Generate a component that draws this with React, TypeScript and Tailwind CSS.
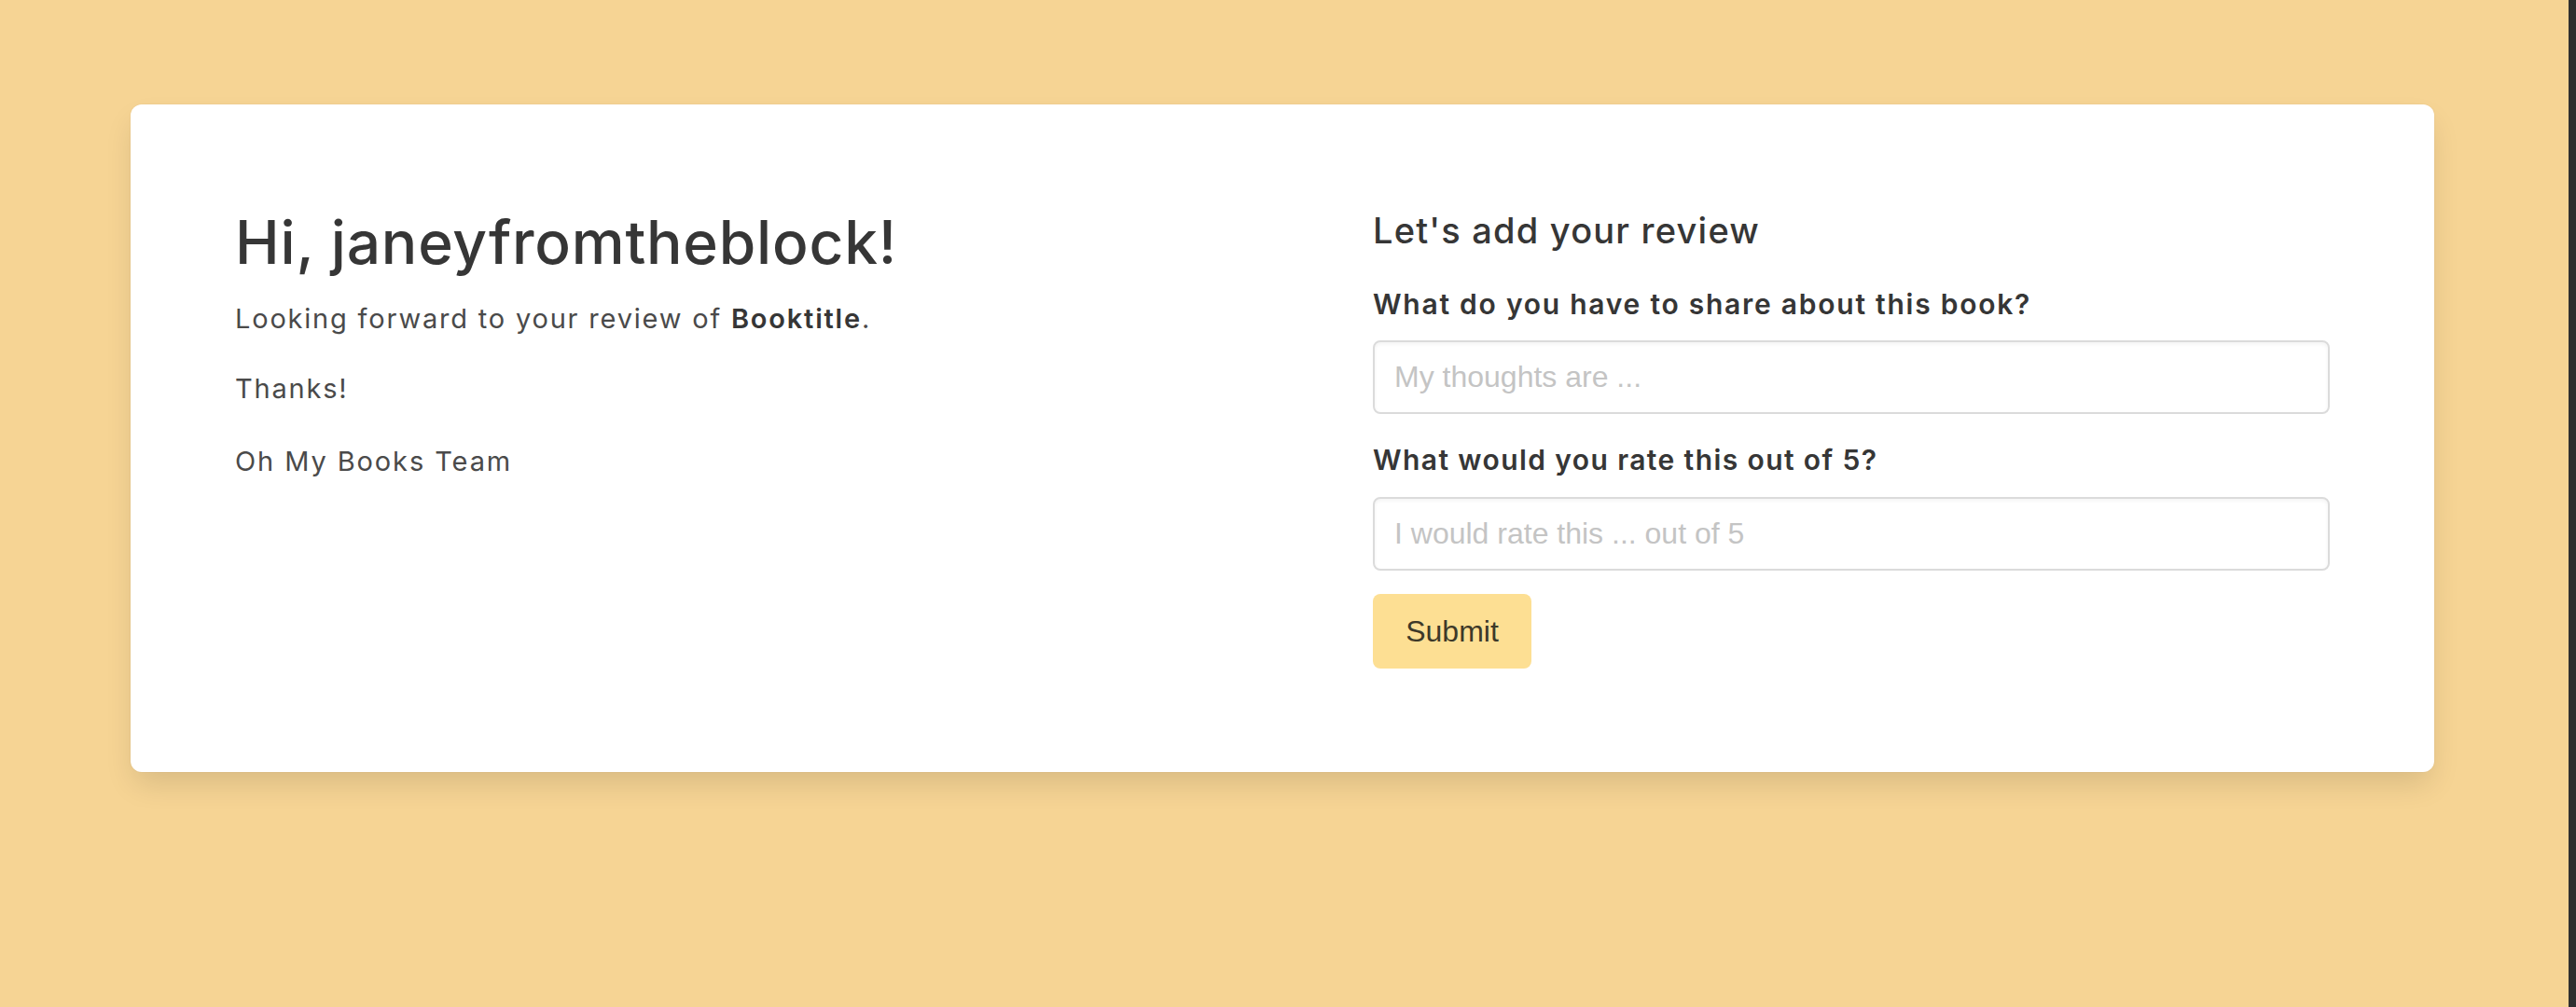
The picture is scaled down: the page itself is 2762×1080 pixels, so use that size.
import React from "react";

export default function App() {
  const poppins = { fontFamily: "Inter, 'Open Sans', sans-serif" };
  const sys = { fontFamily: "'Liberation Sans', Arial, sans-serif" };
  return (
    <div className="flex h-[1080px] w-full bg-[#f6d494]">
      <div className="flex-1">
        <div
          className="ml-[140px] mr-[144px] mt-[112px] rounded-[12px] bg-white pt-[116px] pb-[111px] px-[112px] shadow-[0_16px_32px_-4px_rgba(10,10,10,0.12),0_0_0_1px_rgba(10,10,10,0.02)]"
          style={poppins}
        >
          <div className="flex">
            <div className="flex-1">
              <h1 className="text-[64px] leading-none font-medium tracking-[0.8px] text-[#363636]">
                Hi, janeyfromtheblock!
              </h1>
              <p className="mt-[35px] text-[29px] leading-none tracking-[1.8px] text-[#4a4a4a]">
                Looking forward to your review of{" "}
                <span className="font-semibold text-[#363636]">Booktitle</span>.
              </p>
              <p className="mt-[46px] text-[29px] leading-none tracking-[1.8px] text-[#4a4a4a]">
                Thanks!
              </p>
              <p className="mt-[49px] text-[29px] leading-none tracking-[1.9px] text-[#4a4a4a]">
                Oh My Books Team
              </p>
            </div>
            <div className="w-[1026px] flex flex-col items-start">
              <h2 className="text-[38px] leading-none font-medium tracking-[1.2px] text-[#363636]">
                Let's add your review
              </h2>
              <label className="mt-[45px] text-[30px] leading-none font-semibold tracking-[1.75px] text-[#363636]">
                What do you have to share about this book?
              </label>
              <input
                className="mt-[24px] h-[79px] w-full rounded-[8px] border-2 border-[#dbdbdb] pl-[21px] pr-[24px] text-[32px] text-[#363636] shadow-[inset_0_2px_4px_rgba(10,10,10,0.05)] outline-none placeholder:text-[#c4c4c4]"
                style={sys}
                placeholder="My thoughts are ..."
              />
              <label className="mt-[34px] text-[30px] leading-none font-semibold tracking-[1.4px] text-[#363636]">
                What would you rate this out of 5?
              </label>
              <input
                className="mt-[25px] h-[79px] w-full rounded-[8px] border-2 border-[#dbdbdb] pl-[21px] pr-[24px] text-[32px] text-[#363636] shadow-[inset_0_2px_4px_rgba(10,10,10,0.05)] outline-none placeholder:text-[#c4c4c4]"
                style={sys}
                placeholder="I would rate this ... out of 5"
              />
              <button
                className="mt-[25px] h-[80px] w-[170px] rounded-[8px] bg-[#fddf93] text-[32px] text-[#3d3929]"
                style={sys}
              >
                Submit
              </button>
            </div>
          </div>
        </div>
      </div>
      <div className="w-[8px] h-full bg-[#2f2f2f]" />
    </div>
  );
}
